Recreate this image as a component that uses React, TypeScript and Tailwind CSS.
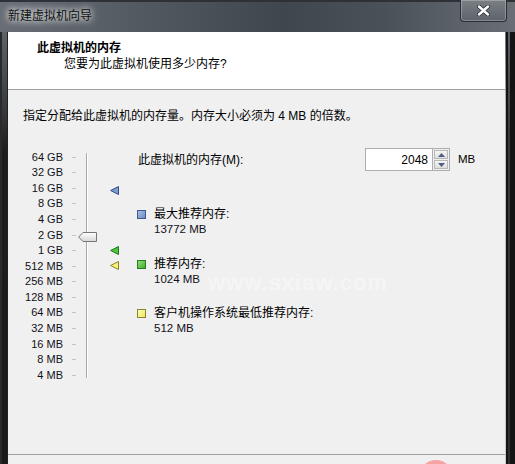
import React from "react";

const labels = [
  "64 GB", "32 GB", "16 GB", "8 GB", "4 GB", "2 GB", "1 GB",
  "512 MB", "256 MB", "128 MB", "64 MB", "32 MB", "16 MB", "8 MB", "4 MB",
];

function Tri({ fill, stroke, top }: { fill: string; stroke: string; top: number }) {
  return (
    <svg className="absolute left-[34px]" style={{ top }} width="9" height="9" viewBox="0 0 9 9">
      <polygon points="8.5,0.5 8.5,8.5 0.6,4.5" fill={fill} stroke={stroke} strokeWidth="1" />
    </svg>
  );
}

function Legend({ fill, stroke, title, value, className }: { fill: string; stroke: string; title: string; value: string; className: string }) {
  return (
    <div className={"flex " + className}>
      <div className="h-[15px] flex items-center">
        <div className="w-[9px] h-[9px] border" style={{ background: fill, borderColor: stroke }} />
      </div>
      <div className="ml-[8px] flex flex-col leading-[15px]">
        <span className="text-[12px]">{title}</span>
        <span className="text-[11.5px] text-[#101020]">{value}</span>
      </div>
    </div>
  );
}

export default function App() {
  return (
    <div className="w-[515px] h-[464px] relative overflow-hidden bg-[#1c1c1c] font-['Liberation_Sans','Noto_Sans_CJK_SC',sans-serif] text-black">
      {/* title bar */}
      <div className="h-[32px] flex items-start justify-between border-t-[2px] border-[#2e3236] bg-[linear-gradient(to_right,#686e75,#50575e_30%,#3f464e_55%,#4a5159_75%,#6a6f76)]">
        <div className="pl-[8px] pt-[6px] text-[12px] leading-[16px] text-[#111] [text-shadow:0_0_6px_#fff,0_0_10px_rgba(255,255,255,0.8)]">
          新建虚拟机向导
        </div>
        <div className="mr-[8px] mt-[-2px] w-[47px] h-[22px] rounded-b-[4px] border border-t-0 border-[#2a2e33] bg-[linear-gradient(to_bottom,#7b8087,#5d636a)] shadow-[inset_0_0_0_1px_rgba(255,255,255,0.25)] flex items-center justify-center">
          <svg width="13" height="11" viewBox="0 0 13 11">
            <path d="M2 1.5 L11 9.5 M11 1.5 L2 9.5" stroke="#2a2e33" strokeWidth="4" strokeLinecap="round" />
            <path d="M2 1.5 L11 9.5 M11 1.5 L2 9.5" stroke="#ffffff" strokeWidth="2.4" strokeLinecap="round" />
          </svg>
        </div>
      </div>

      <div className="flex h-[432px]">
        {/* left frame */}
        <div className="w-[8px] flex bg-[linear-gradient(to_bottom,#5d636a_0px,#3a3e43_70px,#1e1e1e_120px,#1a1a1a)]">
          <div className="w-[2px] bg-[#2a2a2a]" />
          <div className="w-[5px]" />
          <div className="w-[1px] bg-[#222]" />
        </div>

        {/* client */}
        <div className="w-[497px] flex flex-col bg-[#f0f0f0]">
          <div className="h-[58px] bg-white border-b border-[#a0a0a0] pt-[8px] pl-[29px] leading-[16px] text-[12px]">
            <div className="font-bold">此虚拟机的内存</div>
            <div className="ml-[27px]">您要为此虚拟机使用多少内存?</div>
          </div>

          <div className="h-[365px] border-b border-[#a0a0a0] flex flex-col">
            <div className="pt-[18px] pl-[15px] leading-[16px] text-[12px]">
              指定分配给此虚拟机的内存量。内存大小必须为 4 MB 的倍数。
            </div>

            <div className="mt-[24px] flex">
              {/* labels + ticks */}
              <div className="flex flex-col pt-[1.5px]">
                {labels.map((l) => (
                  <div key={l} className="h-[15.57px] flex items-center">
                    <span className="w-[55px] text-right text-[11px] leading-[13px] text-[#101018]">{l}</span>
                    <span className="ml-[9px] w-[4px] h-px bg-[#c4c4c4]" />
                  </div>
                ))}
              </div>

              {/* track area */}
              <div className="relative w-[62px]">
                <div className="absolute left-[10px] top-[5px] h-[225px] w-[2px] border-l border-[#a8a8a8] bg-white" />
                <svg className="absolute left-[2px] top-[84px]" width="19" height="10" viewBox="0 0 19 10">
                  <defs>
                    <linearGradient id="thumbg" x1="0" y1="0" x2="0" y2="1">
                      <stop offset="0" stopColor="#ffffff" />
                      <stop offset="1" stopColor="#d6d6d6" />
                    </linearGradient>
                  </defs>
                  <path d="M0.6 5 L5 0.5 H18.5 V9.5 H5 Z" fill="url(#thumbg)" stroke="#767676" strokeWidth="1" />
                </svg>
                <Tri fill="#7f9ccf" stroke="#2f4f8c" top={37.5} />
                <Tri fill="#4ec43c" stroke="#1f7a1f" top={97.5} />
                <Tri fill="#f6f27a" stroke="#8c8420" top={112.5} />
              </div>

              {/* right column */}
              <div className="flex flex-col">
                <div className="h-[23px] flex items-center">
                  <span className="w-[227px] text-[12px]">此虚拟机的内存(M):</span>
                  <div className="w-[68px] h-[23px] border border-[#abadb3] bg-white flex items-center justify-end pr-[4px] text-[12px]">
                    2048
                  </div>
                  <div className="w-[17px] h-[23px] flex flex-col border border-l-0 border-[#abadb3] p-px gap-px">
                    <div className="flex-1 border border-[#b8b8b8] bg-[linear-gradient(to_bottom,#f6f6f6,#dedede)] flex items-center justify-center">
                      <svg width="7" height="4" viewBox="0 0 7 4"><polygon points="0,4 7,4 3.5,0" fill="#4c5f82" /></svg>
                    </div>
                    <div className="flex-1 border border-[#b8b8b8] bg-[linear-gradient(to_bottom,#f6f6f6,#dedede)] flex items-center justify-center">
                      <svg width="7" height="4" viewBox="0 0 7 4"><polygon points="0,0 7,0 3.5,4" fill="#4c5f82" /></svg>
                    </div>
                  </div>
                  <span className="ml-[8px] text-[11.5px]">MB</span>
                </div>

                <Legend className="mt-[35.5px] -ml-px" fill="linear-gradient(135deg,#a9bde2,#6f8cc4)" stroke="#3b5a8e" title="最大推荐内存:" value="13772 MB" />
                <Legend className="mt-[20px] -ml-px" fill="linear-gradient(135deg,#8ee07a,#3fae2e)" stroke="#2b7a22" title="推荐内存:" value="1024 MB" />
                <Legend className="mt-[19px] -ml-px" fill="linear-gradient(135deg,#fdfcb8,#eeea5a)" stroke="#8a8530" title="客户机操作系统最低推荐内存:" value="512 MB" />
              </div>
            </div>
          </div>
          <div className="flex-1" />
        </div>

        {/* right frame */}
        <div className="w-[10px] flex bg-[#1a1a1a]">
          <div className="w-[1px] bg-[linear-gradient(to_bottom,#6a6f76,#b8b8b8_80px,#c8c8c8)]" />
          <div className="w-[2px] bg-[#151515]" />
          <div className="w-[2px] bg-[linear-gradient(to_bottom,#5d636a,#3a3a3a_100px,#2e2e2e)]" />
          <div className="flex-1 bg-[#141414]" />
        </div>
      </div>

      {/* watermark */}
      <div className="absolute left-[208px] top-[266px] text-[22px] font-bold text-white/40 tracking-[1px] pointer-events-none">
        www.sxiaw.com
      </div>
      <div className="absolute left-[419px] top-[460px] w-[34px] h-[34px] rounded-full bg-[#f5a3a3]" />
    </div>
  );
}
